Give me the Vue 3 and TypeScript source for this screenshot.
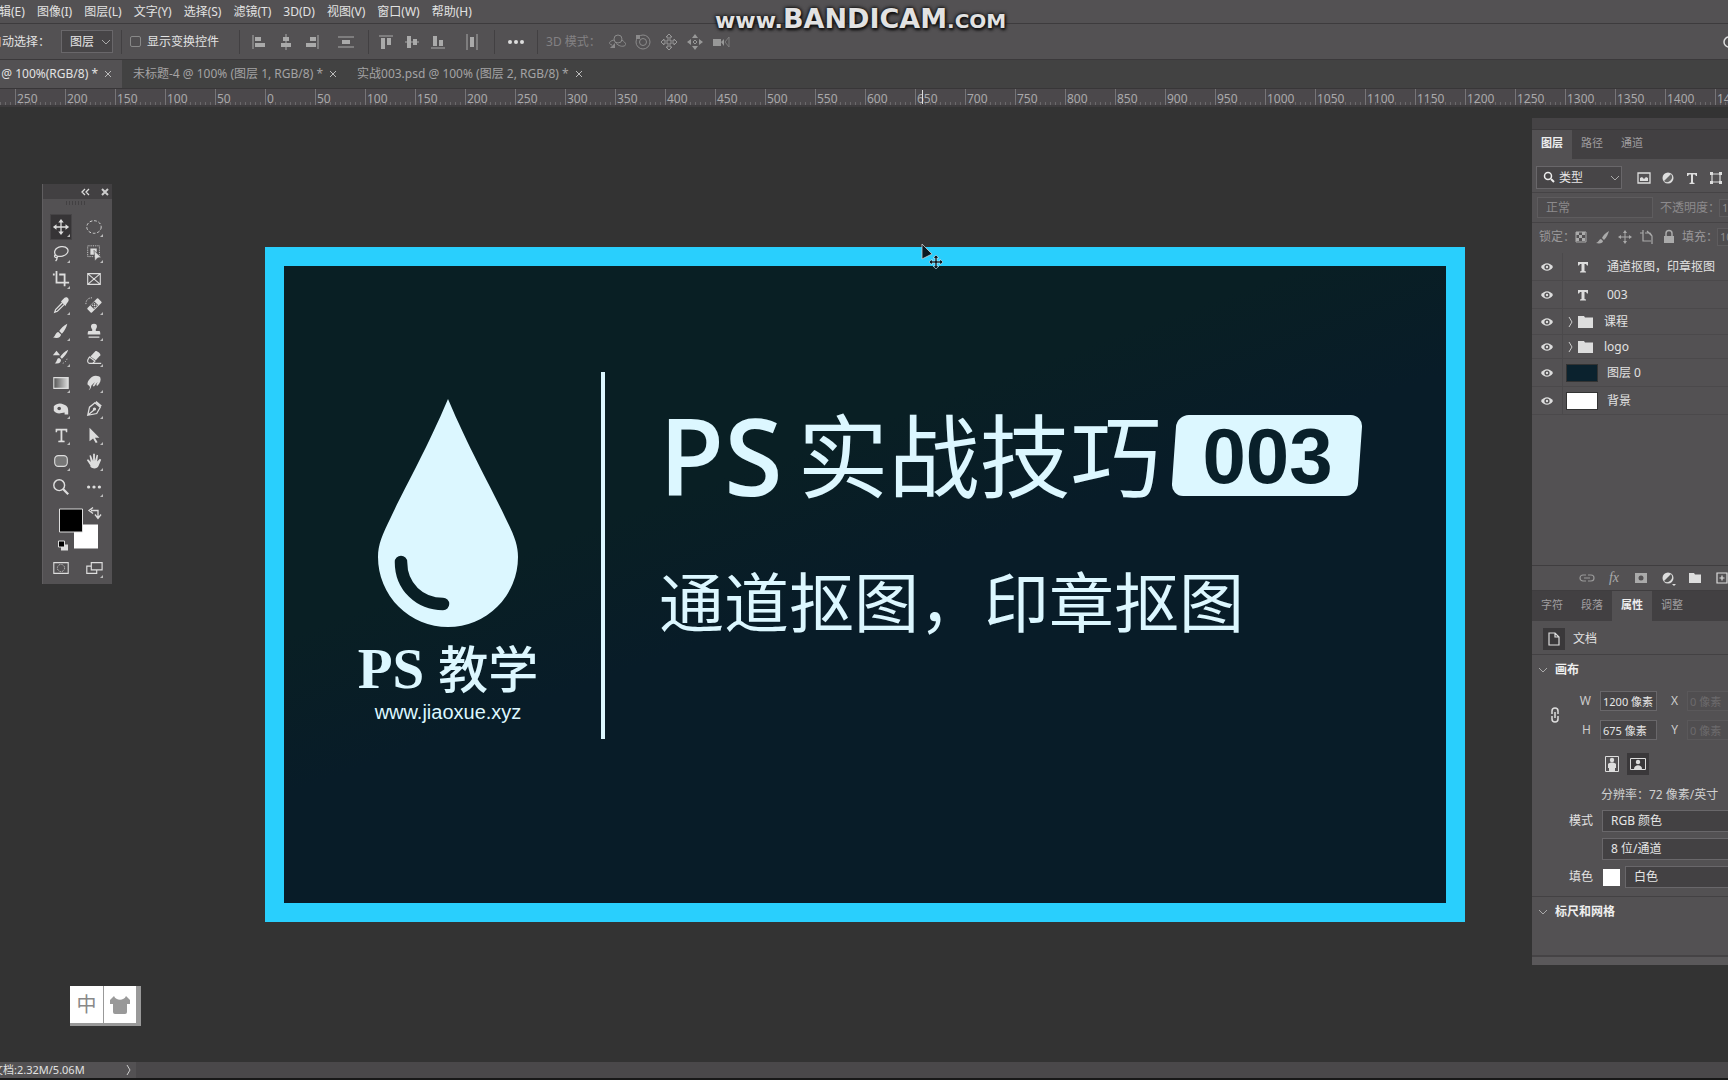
<script setup lang="ts">
interface MenuEntry { label: string }
interface Layer { name: string; kind: 'text' | 'group' | 'dark' | 'white'; height: string }

const menus: MenuEntry[] = [
  '编辑(E)', '图像(I)', '图层(L)', '文字(Y)', '选择(S)', '滤镜(T)', '3D(D)', '视图(V)', '窗口(W)', '帮助(H)',
].map((label) => ({ label }))

const tabs: string[] = ['1 @ 100%(RGB/8) *', '未标题-4 @ 100% (图层 1, RGB/8) *', '实战003.psd @ 100% (图层 2, RGB/8) *']

const rulerMarks: number[] = Array.from({ length: 50 }, (_, i) => Math.abs(i * 50 - 300))

const alignA: Record<string, string> = {
  左对齐: '<path d="M2 2v14" stroke="#aaa"/><path d="M4 4h6v4H4zM4 10h10v4H4z" fill="#aaa"/>',
  水平居中: '<path d="M9 1v16" stroke="#aaa"/><path d="M6 4h6v4H6zM4 10h10v4H4z" fill="#aaa"/>',
  右对齐: '<path d="M15 2v14" stroke="#aaa"/><path d="M7 4h6v4H7zM3 10h10v4H3z" fill="#aaa"/>',
}
const alignB: Record<string, string> = {
  垂直分布: '<path d="M1 4h16M1 14h16" stroke="#aaa"/><path d="M5 7h8v4H5z" fill="#aaa"/>',
}
const alignC: Record<string, string> = {
  顶对齐: '<path d="M2 3h14" stroke="#aaa"/><path d="M4 5h4v11H4zM10 5h4v7h-4z" fill="#aaa"/>',
  垂直居中: '<path d="M2 9h14" stroke="#aaa"/><path d="M4 3h4v12H4zM10 6h4v6h-4z" fill="#aaa"/>',
  底对齐: '<path d="M2 15h14" stroke="#aaa"/><path d="M4 3h4v10H4zM10 7h4v6h-4z" fill="#aaa"/>',
}
const alignD: Record<string, string> = {
  水平分布: '<path d="M4 1v16M14 1v16" stroke="#aaa"/><path d="M7 4h4v10H7z" fill="#aaa"/>',
}
const modes3d: Record<string, string> = {
  旋转: '<g fill="none" stroke="#999"><circle cx="10" cy="6" r="4"/><path d="M6 7C1 8 0 11 4 12M14 7c4 3 5 5 2 6-3 1-7-1-9-4"/></g><path d="M2 15l5-5v5z" fill="#999"/>',
  滚动: '<g fill="none" stroke="#999"><circle cx="9" cy="9" r="7"/><circle cx="9" cy="9" r="3.5"/></g><path d="M2 2h4v4H2z" fill="#999"/>',
  拖动: '<path d="M9 1l3 3h-2v4h4V6l3 3-3 3v-2h-4v4h2l-3 3-3-3h2v-4H4v2L1 9l3-3v2h4V4H6z" fill="none" stroke="#aaa"/>',
  滑动: '<path d="M9 1l3 4H6zM9 17l3-4H6zM1 9l4-3v6zM17 9l-4-3v6z" fill="#aaa"/><path d="M7 9l2-2 2 2-2 2z" fill="none" stroke="#aaa"/>',
  缩放: '<path d="M1 6h8v7H1zM9 9l3-3v7z" fill="#aaa"/><path d="M17 4l-4 5 4 5z" fill="none" stroke="#888"/>',
}

const tools: { name: string; art: string; more: boolean }[] = [
  { name: '移动工具', more: true, art: '<path d="M10 3v14M3 10h14" stroke="#ddd" stroke-width="1.4"/><path d="M10 1l3 4H7zM10 19l3-4H7zM1 10l4-3v6zM19 10l-4-3v6z" fill="#ddd"/>' },
  { name: '椭圆选框工具', more: true, art: '<ellipse cx="10" cy="10" rx="8" ry="7" fill="none" stroke="#ddd" stroke-dasharray="3 2"/>' },
  { name: '套索工具', more: true, art: '<path d="M5 13C1 10 3 4 10 3s9 4 7 7-8 5-12 3zm0 0c-2-2-3 1-1 2s3-1 1-2zm0 2c1 1 0 3-1 4" fill="none" stroke="#ddd" stroke-width="1.4"/>' },
  { name: '对象选择工具', more: true, art: '<path d="M3 2h13v12H3z" fill="none" stroke="#ddd" stroke-dasharray="1 1"/><path d="M6 5h7v4l-3 3H6z" fill="#ddd"/><path d="M10 7l8 8-4 .5L11 19z" fill="#ddd" stroke="#535153" stroke-width=".7"/>' },
  { name: '裁剪工具', more: true, art: '<path d="M5 1v13h8M1 5h2M8 5h6v13M15 14h4" fill="none" stroke="#ddd" stroke-width="2"/>' },
  { name: '图框工具', more: false, art: '<path d="M3 4h14v12H3zM3 4l14 12M17 4L3 16" fill="none" stroke="#ddd" stroke-width="1.2"/>' },
  { name: '吸管工具', more: true, art: '<path d="M12 7l-8 8-1 3 3-1 8-8" fill="none" stroke="#ddd" stroke-width="1.4"/><path d="M10 6l5 5 1-2 2-3c2-3-2-6-4-4l-2 2z" fill="#ddd"/>' },
  { name: '污点修复画笔工具', more: true, art: '<path d="M3.500 14L14 3.500l3.500 3.500L7 17.500z" fill="#ddd" stroke="#ddd" stroke-width="2" stroke-linejoin="round"/><path d="M6 10.500L10.500 6l4 4-4.500 4.500z" fill="#535153"/><path d="M8 10.300h5M10.500 8v5" stroke="#ddd" stroke-width="1.500" stroke-dasharray="1 1"/><path d="M1 9C1 4 4 2 8 2" fill="none" stroke="#ddd" stroke-dasharray="1 1"/>' },
  { name: '画笔工具', more: true, art: '<path d="M17 2c-4 2-7 5-9 8l3 3c3-3 5-7 6-11zM7 11c-3 0-3 5-6 6 5 2 9 0 9-3z" fill="#ddd"/>' },
  { name: '仿制图章工具', more: true, art: '<path d="M10 2c4 0 4 4 2 6v2h4c1 0 1 3 1 4H3c0-1 0-4 1-4h4V8C6 6 6 2 10 2zM4 16h12v1.500H4z" fill="#ddd"/>' },
  { name: '历史记录画笔工具', more: true, art: '<path d="M18 2c-4 2-7 5-9 8l2 2c3-3 6-6 7-10zM8 11c-3 0-2 4-5 6 5 1 7-1 7-4z" fill="#ddd"/><path d="M1 8l4-5 4 5z" fill="#ddd"/><path d="M12 17c3-1 5-4 5-7" fill="none" stroke="#ddd" stroke-dasharray="1 2"/>' },
  { name: '橡皮擦工具', more: true, art: '<path d="M11.500 3.500c1-1 6.500 2.500 5.500 4.500l-5 5.500-6-4z" fill="#ddd"/><path d="M5 10l6 4.500-2.500 2.500H5c-2 0-3-3-1-5.500zM8 17h10" fill="none" stroke="#ddd" stroke-width="1.300"/>' },
  { name: '渐变工具', more: true, art: '<defs><linearGradient id="ramp"><stop offset="0" stop-color="#555"/><stop offset="1" stop-color="#ddd"/></linearGradient></defs><path d="M2 4h16v12H2z" fill="url(#ramp)" stroke="#ddd" stroke-width="1.200"/>' },
  { name: '涂抹工具', more: true, art: '<path d="M4 18c3-3 1-5-1-6-1-3 2-7 5-9 3-2 8-1 9 1 1 3 0 6-3 9l-1.500-.500L14 9l-4 5-1.500-.700L11 9l-4 4c0 2-1 4-3 5z" fill="#ddd"/>' },
  { name: '减淡工具', more: true, art: '<path d="M2 7c3-3 7-4 11-2 4 1 5 4 5 7v4h-4v-2c-5 1-9 2-12-2z" fill="#ddd"/><circle cx="8" cy="9.500" r="2" fill="#535153"/>' },
  { name: '钢笔工具', more: true, art: '<path d="M3 17l2-9 6-5 6 5-4 7zM3 17l7-6" fill="none" stroke="#ddd" stroke-width="1.400"/><circle cx="10.500" cy="10" r="1.800" fill="#ddd"/><path d="M12 2l6 5" stroke="#ddd" stroke-width="2"/>' },
  { name: '横排文字工具', more: true, art: '<path d="M4 3h13v4h-1.500L15 5h-3.500v11l2.500.500V18H7v-1.500l2.500-.500V5H6l-.500 2H4z" fill="#ddd"/>' },
  { name: '路径选择工具', more: true, art: '<path d="M5 2v15l4-3 3 5 2-1-3-5h5z" fill="#ddd"/>' },
  { name: '圆角矩形工具', more: true, art: '<rect x="3" y="4" width="14" height="12" rx="4" fill="#777" stroke="#ddd" stroke-width="1.200"/>' },
  { name: '抓手工具', more: true, art: '<path d="M6 15L2 9l1.500-1 3 3L5 4l1.500-.500L9 10V2h2v8l2-7 1.500.500-1 7 3-3 1.500 1-3 7c-1 3-6 4-9 1z" fill="#ddd"/>' },
  { name: '缩放工具', more: false, art: '<circle cx="8" cy="8" r="6" fill="none" stroke="#ddd" stroke-width="1.600"/><path d="M12 12l6 6" stroke="#ddd" stroke-width="2.500"/>' },
  { name: '编辑工具栏', more: true, art: '<circle cx="4" cy="10" r="1.800" fill="#ddd"/><circle cx="10" cy="10" r="1.800" fill="#ddd"/><circle cx="16" cy="10" r="1.800" fill="#ddd"/>' },
]
const quickTools: { name: string; art: string; more: boolean }[] = [
  { name: '快速蒙版', more: false, art: '<path d="M2 4h16v12H2z" fill="none" stroke="#ddd" stroke-width="1.200"/><circle cx="10" cy="10" r="4" fill="none" stroke="#ddd" stroke-dasharray="1 1"/>' },
  { name: '屏幕模式', more: true, art: '<path d="M7 4h12v8H7zM7 8H2v8h11v-4" fill="none" stroke="#ddd" stroke-width="1.300"/>' },
]

const filterIcons: Record<string, string> = {
  像素图层: '<path d="M3 4h12v10H3z" fill="none" stroke="#ddd" stroke-width="1.300"/><path d="M5 12V9l2-1 2 2 2-2 2 1v3z" fill="#ddd"/>',
  调整图层: '<circle cx="9" cy="9" r="5.500" fill="#ddd"/><path d="M12 5L5 12a5 5 0 0 0 7-7z" fill="#666"/>',
  文字图层: '<path d="M4 4h10v3h-1l-1-1.500h-2v8l1.500.500v1h-5v-1L8 13.500v-8H6L5 7H4z" fill="#ddd"/>',
  形状图层: '<path d="M5 5h8v8H5z" fill="none" stroke="#ddd" stroke-width="1.200"/><path d="M3 3h3v3H3zM12 3h3v3h-3zM3 12h3v3H3zM12 12h3v3h-3z" fill="#ddd"/>',
}
const lockIcons: Record<string, string> = {
  锁定透明像素: '<path d="M4 4h10v10H4z" fill="none" stroke="#aaa"/><path d="M4 4h3v3H4zM10 4h3v3h-3zM7 7h3v3H7zM4 10h3v3H4zM10 10h3v3h-3z" fill="#aaa"/>',
  锁定图像像素: '<path d="M15 3c-4 2-6 5-7 7l2 2c3-3 4-6 5-9zM7 11c-2 0-2 3-5 4 4 1 7 0 7-2z" fill="#aaa"/>',
  锁定位置: '<path d="M9 4v10M4 9h10" stroke="#aaa"/><path d="M9 2l2 3H7zM9 16l2-3H7zM2 9l3-2v4zM16 9l-3-2v4z" fill="#aaa"/>',
  锁定画板: '<path d="M5 2v11h8M2 5h3M7 5h5l2 3v8M9 3l5 5" fill="none" stroke="#aaa" stroke-width="1.200"/>',
  锁定全部: '<path d="M4 8h10v7H4z" fill="#aaa"/><path d="M6 8V5.500a3 3 0 0 1 6 0V8" fill="none" stroke="#aaa" stroke-width="1.500"/>',
}
const footIcons: Record<string, string> = {
  链接图层: '<path d="M8 12H5a3 3 0 0 1 0-6h3M10 6h3a3 3 0 0 1 0 6h-3M6 9h6" fill="none" stroke="#999" stroke-width="1.200"/>',
  添加蒙版: '<path d="M3 4h12v10H3z" fill="#aaa"/><circle cx="9" cy="9" r="2.500" fill="#535153"/>',
  调整: '<circle cx="9" cy="9" r="5.500" fill="#ddd"/><path d="M12 5L5 12a5 5 0 0 0 7-7z" fill="#555"/><path d="M13 15h4l-2 2z" fill="#ddd"/>',
  新建组: '<path d="M3 4h5l1 1.500h6V14H3z" fill="#ddd"/>',
  新建图层: '<path d="M4 4h10v10H4zM9 6.500v5M6.500 9h5" fill="none" stroke="#ddd" stroke-width="1.200"/>',
}

const layers: Layer[] = [
  { name: '通道抠图，印章抠图', kind: 'text', height: '28px' },
  { name: '003', kind: 'text', height: '28px' },
  { name: '课程', kind: 'group', height: '26px' },
  { name: 'logo', kind: 'group', height: '24px' },
  { name: '图层 0', kind: 'dark', height: '28px' },
  { name: '背景', kind: 'white', height: '28px' },
]
</script>

<template>
  <div class="app">
    <nav class="menubar">
      <button v-for="m in menus" :key="m.label">{{ m.label }}</button>
      <div class="watermark"><small>www.</small>BANDICAM<small class="com">.COM</small></div>
    </nav>

    <div class="options">
      <label class="auto" for="auto-pick">自动选择：</label>
      <span class="pick">
        <select id="auto-pick"><option>图层</option></select>
        <svg class="chev" viewBox="0 0 10 10"><path d="M1 3l4 4 4-4" fill="none" stroke="#aaa" /></svg>
      </span>
      <i class="rule"></i>
      <label class="tick"><input type="checkbox" />显示变换控件</label>
      <i class="rule wide"></i>
      <div class="icons">
        <button v-for="(art, name) in alignA" :key="name" :aria-label="name"><svg viewBox="0 0 18 18" v-html="art"></svg></button>
      </div>
      <div class="icons distribute">
        <button v-for="(art, name) in alignB" :key="name" :aria-label="name"><svg viewBox="0 0 18 18" v-html="art"></svg></button>
      </div>
      <i class="rule"></i>
      <div class="icons">
        <button v-for="(art, name) in alignC" :key="name" :aria-label="name"><svg viewBox="0 0 18 18" v-html="art"></svg></button>
      </div>
      <div class="icons distribute">
        <button v-for="(art, name) in alignD" :key="name" :aria-label="name"><svg viewBox="0 0 18 18" v-html="art"></svg></button>
      </div>
      <i class="rule"></i>
      <button class="more" aria-label="更多"><b></b><b></b><b></b></button>
      <i class="rule"></i>
      <span class="mode3d">3D 模式：</span>
      <div class="icons faint">
        <button v-for="(art, name) in modes3d" :key="name" :aria-label="name"><svg viewBox="0 0 18 18" v-html="art"></svg></button>
      </div>
      <button class="search" aria-label="搜索"><svg viewBox="0 0 14 14"><circle cx="7" cy="7" r="5" fill="none" stroke="#ddd" stroke-width="1.500" /></svg></button>
    </div>

    <div class="tabbar">
      <div v-for="(t, i) in tabs" :key="t" class="tab" :class="{ on: i === 0 }">
        <span>{{ t }}</span>
        <button aria-label="关闭"><svg viewBox="0 0 8 8"><path d="M1 1l6 6M7 1L1 7" stroke="#bbb" /></svg></button>
      </div>
    </div>

    <div class="ruler">
      <span v-for="(n, i) in rulerMarks" :key="i">{{ n }}</span>
      <i class="pointer-mark"></i>
    </div>

    <main class="workspace">
      <section class="document">
        <div class="artboard">
          <div class="brand">
            <svg class="drop" viewBox="0 0 140 228">
              <path d="M70 0C92 52 113 88 127 118C136 136 140 146 140 158A70 70 0 0 1 0 158C0 146 4 136 13 118C27 88 48 52 70 0Z" fill="#dcf7ff" />
              <path d="M23 163C23 188 42 205 65 205" fill="none" stroke="#091f25" stroke-width="12.500" stroke-linecap="round" />
            </svg>
            <div class="brand-name"><b>PS</b><span>教学</span></div>
            <div class="brand-url">www.jiaoxue.xyz</div>
          </div>
          <div class="bar"></div>
          <div class="copy">
            <h1><b>PS</b><span>实战技巧</span><em>003</em></h1>
            <h2>通道抠图，印章抠图</h2>
          </div>
        </div>
      </section>

      <aside class="toolbox">
        <header>
          <svg viewBox="0 0 10 8"><path d="M4 1L1 4l3 3M8 1L5 4l3 3" fill="none" stroke="#ddd" stroke-width="1.300" /></svg>
          <svg viewBox="0 0 8 8"><path d="M1 1l6 6M7 1L1 7" stroke="#ccc" stroke-width="2" /></svg>
        </header>
        <div class="grip"></div>
        <div class="tools">
          <button v-for="(t, i) in tools" :key="t.name" :aria-label="t.name" :class="{ on: i === 0, more: t.more }">
            <svg viewBox="0 0 20 20" v-html="t.art"></svg>
          </button>
        </div>
        <svg class="swatches" viewBox="0 0 66 54">
          <path d="M29 24h24v24H29z" fill="#fff" />
          <path d="M14.500 8.500h23v23h-23z" fill="#000" stroke="#ddd" />
          <path d="M46 10h7v7M50 14l3 4 3-4M48 7l-4 3 4 3" fill="none" stroke="#ddd" stroke-width="1.300" />
          <path d="M16 44h7v6h-7z" fill="#ddd" /><path d="M13.500 40.500h6v6h-6z" fill="#000" stroke="#ddd" />
        </svg>
        <div class="tools">
          <button v-for="t in quickTools" :key="t.name" :aria-label="t.name" :class="{ more: t.more }">
            <svg viewBox="0 0 20 20" v-html="t.art"></svg>
          </button>
        </div>
      </aside>

      <aside class="panels">
        <div class="panel-head"></div>
        <div class="ptabs layers-tabs"><button class="on">图层</button><button>路径</button><button>通道</button></div>
        <div class="prow filter">
          <span class="kind">
            <svg class="mag" viewBox="0 0 12 12"><circle cx="5" cy="5" r="3.500" fill="none" stroke="#eee" stroke-width="1.500" /><path d="M8 8l3 3" stroke="#eee" stroke-width="2" /></svg>
            <select aria-label="筛选类型"><option>类型</option></select>
            <svg class="chev" viewBox="0 0 10 10"><path d="M1 3l4 4 4-4" fill="none" stroke="#aaa" /></svg>
          </span>
          <button v-for="(art, name) in filterIcons" :key="name" :aria-label="name"><svg viewBox="0 0 18 18" v-html="art"></svg></button>
        </div>
        <div class="prow blend">
          <select aria-label="混合模式" disabled><option>正常</option></select>
          <label for="opacity">不透明度：</label><input id="opacity" value="100%" disabled />
        </div>
        <div class="prow lock">
          <span>锁定：</span>
          <button v-for="(art, name) in lockIcons" :key="name" :aria-label="name"><svg viewBox="0 0 18 18" v-html="art"></svg></button>
          <label for="fill">填充：</label><input id="fill" value="100%" disabled />
        </div>
        <ul class="layer-list">
          <li v-for="l in layers" :key="l.name" :class="l.kind" :style="{ height: l.height }">
            <button class="eye" aria-label="可见性">
              <svg viewBox="0 0 14 10"><path d="M1 5c3-5 9-5 12 0-3 5-9 5-12 0z" fill="#ddd" /><circle cx="7" cy="5" r="2.600" fill="#535153" /><circle cx="7" cy="5" r="1.200" fill="#ddd" /></svg>
            </button>
            <span class="thumb">
              <svg v-if="l.kind === 'text'" viewBox="0 0 18 18"><path d="M4 4h10v3.500h-1L12 6h-1.500v7l1.500.500v1H6v-1l1.500-.500V6H6L5 7.500H4z" fill="#ddd" /></svg>
              <svg v-else-if="l.kind === 'group'" class="folder" viewBox="0 0 26 14"><path d="M1 2l3 5-3 5" fill="none" stroke="#ccc" /><path d="M10 1h6l1 1.500h8V13H10z" fill="#ddd" /></svg>
              <i v-else></i>
            </span>
            <span>{{ l.name }}</span>
          </li>
        </ul>
        <div class="foot">
          <template v-for="(art, name, i) in footIcons" :key="name">
            <button :aria-label="name"><svg viewBox="0 0 18 18" v-html="art"></svg></button>
            <button v-if="i === 0" class="fx">fx</button>
          </template>
        </div>
        <div class="ptabs props-tabs"><button>字符</button><button>段落</button><button class="on">属性</button><button>调整</button></div>
        <div class="doc-row">
          <i><svg viewBox="0 0 14 16"><path d="M2 2h6l4 4v8H2zM8 2v4h4" fill="none" stroke="#ddd" stroke-width="1.200" /></svg></i>文档
        </div>
        <div class="fold"><svg viewBox="0 0 10 10"><path d="M1 3l4 4 4-4" fill="none" stroke="#aaa" /></svg>画布</div>
        <div class="canvas-props">
          <svg class="chain" viewBox="0 0 10 16"><path d="M2 7V4a3 3 0 0 1 6 0v3M2 9v3a3 3 0 0 0 6 0V9M5 5v6" fill="none" stroke="#ddd" stroke-width="1.500" /></svg>
          <div class="size-grid">
            <label for="w">W</label><input id="w" value="1200 像素" /><label for="x">X</label><input id="x" value="0 像素" disabled />
            <label for="h">H</label><input id="h" value="675 像素" /><label for="y">Y</label><input id="y" value="0 像素" disabled />
          </div>
        </div>
        <div class="orient">
          <button aria-label="纵向"><svg viewBox="0 0 22 22"><path d="M4.500 3.500h13v15h-13z" fill="none" stroke="#ddd" /><circle cx="11" cy="7" r="2.200" fill="#ddd" /><path d="M7 11c2-2 6-2 8 0v4h-1v3H8v-3H7z" fill="#ddd" /></svg></button>
          <button class="on" aria-label="横向"><svg viewBox="0 0 22 22"><path d="M3.500 5.500h15v11h-15z" fill="none" stroke="#ddd" /><circle cx="11" cy="9" r="2.200" fill="#ddd" /><path d="M7 16c0-5 8-5 8 0z" fill="#ddd" /></svg></button>
        </div>
        <div class="resolution">分辨率：72 像素/英寸</div>
        <div class="field"><label for="mode">模式</label><select id="mode"><option>RGB 颜色</option></select></div>
        <div class="field"><label for="depth"></label><select id="depth" aria-label="位深"><option>8 位/通道</option></select></div>
        <div class="field"><label for="paint">填色</label><i class="chip"></i><select id="paint"><option>白色</option></select></div>
        <div class="fold last"><svg viewBox="0 0 10 10"><path d="M1 3l4 4 4-4" fill="none" stroke="#aaa" /></svg>标尺和网格</div>
        <div class="panel-end"></div>
      </aside>

      <div class="ime">
        <button>中</button>
        <button aria-label="皮肤"><svg viewBox="0 0 22 20"><path d="M5 1c2 5 10 5 12 0l4 4v4h-3v8q0 2-2 2H6q-2 0-2-2V9H1V5z" fill="#999" /></svg></button>
      </div>

      <svg class="cursor" viewBox="0 0 28 30">
        <path d="M1 1v15l10-5z" fill="#0a1a22" stroke="#ccc" stroke-width=".800" />
        <path d="M15 12l3 3h-2v3h3v-2l3 3-3 3v-2h-3v3h2l-3 3-3-3h2v-3h-3v2l-3-3 3-3v2h3v-3h-2z" fill="#0a1a22" stroke="#cef" stroke-width=".600" />
      </svg>
    </main>

    <footer class="status"><div><span>文档:2.32M/5.06M</span><svg viewBox="0 0 6 12"><path d="M1 1l3 5-3 5" fill="none" stroke="#ccc" /></svg></div></footer>
  </div>
</template>

<style>
body { background: #333; }
</style>

<style scoped>
* { box-sizing: border-box; }
button { border: 0; padding: 0; margin: 0; background: none; color: inherit; font: inherit; line-height: 1; }
select, input { appearance: none; border: 1px solid #69676a; border-radius: 0; margin: 0; background: #474547; color: #e6e6e6; font: inherit; outline: 0; opacity: 1; }
svg { display: block; }
i { font-style: normal; }
.app { display: flex; flex-direction: column; min-height: 100vh; overflow: hidden; background: #333; color: #e2e2e2; font: 12px/16px "Noto Sans", "Noto Sans CJK SC", sans-serif; white-space: nowrap; }

.menubar { position: relative; display: flex; align-items: center; gap: 12px; height: 24px; background: #535153; border-bottom: 1px solid #3d3b3d; }
.menubar button { flex: none; }
.menubar button:first-child { margin-left: -13px; }
.watermark { position: absolute; z-index: 2; left: 715px; top: 4px; display: flex; align-items: baseline; font: bold 27px/30px "DejaVu Sans", sans-serif; color: #e2e2e2; text-shadow: 0 0 3px #111, 0 0 4px #111, 1px 2px 3px #111; }
.watermark small { font-size: 22px; }
.watermark .com { font-size: 20px; }

.options { display: flex; align-items: center; height: 36px; background: #535153; border-bottom: 1px solid #3b393b; overflow: hidden; }
.auto { width: 68px; margin-left: -10px; }
.pick { position: relative; display: block; width: 52px; height: 23px; margin-left: 3px; }
.pick select { width: 100%; height: 100%; padding: 0 8px; }
.chev { position: absolute; right: 2px; top: 7px; width: 10px; height: 10px; pointer-events: none; }
.rule { flex: none; width: 1px; height: 24px; margin: 0 8px; background: #424042; }
.rule.wide { margin: 0 11px 0 20px; }
.tick { display: flex; align-items: center; gap: 6px; }
.tick input { width: 11px; height: 11px; border-color: #888; border-radius: 2px; background: #504e50; }
.icons { display: flex; gap: 8px; }
.icons svg { width: 18px; height: 18px; }
.icons.distribute { margin: 0 5px 0 16px; }
.icons.faint { margin-left: 2px; opacity: .8; }
.more { display: flex; gap: 2px; margin: 0 5px; }
.more b { width: 4px; height: 4px; border-radius: 50%; background: #ddd; }
.mode3d { color: #838183; width: 60px; }
.search { margin: 0 -8px 0 auto; }
.search svg { width: 14px; height: 14px; }

.tabbar { display: flex; height: 29px; background: #424242; border-bottom: 1px solid #383638; }
.tab { display: flex; align-items: center; gap: 6px; padding: 0 9px 0 11px; color: #a4a2a4; }
.tab.on { justify-content: flex-end; width: 122px; padding-right: 10px; background: #535153; color: #e2e2e2; }
.tab svg { width: 8px; height: 8px; }
.tab button { width: 8px; }

.ruler { position: relative; display: flex; height: 18px; overflow: hidden; background: #4b484b; border-bottom: 2px solid #3d3b3d; color: #aaa8aa; }
.ruler span { flex: none; width: 50px; padding-left: 2px; line-height: 19px; background: linear-gradient(90deg, #767476 1px, transparent 1px), repeating-linear-gradient(90deg, #6a686a 0 1px, transparent 1px 5px) bottom / 100% 3px no-repeat; }
.ruler span:first-child { margin-left: -35px; }
.pointer-mark { position: absolute; left: 922px; top: 1px; width: 1px; height: 14px; background: #ddd; }

.workspace { position: relative; flex: 1; min-height: 880px; background: #333; }
.document { position: absolute; left: 265px; top: 140px; width: 1200px; height: 675px; padding: 19px; background: #29cffd; }
.artboard { display: flex; height: 100%; background: linear-gradient(160deg, #091f24 35%, #081c28 50%); color: #dcf7ff; }
.brand { display: flex; flex-direction: column; align-items: center; width: 328px; padding-top: 133px; }
.drop { width: 140px; height: 228px; }
.brand-name { display: flex; gap: 14px; align-items: baseline; margin-top: 8px; line-height: 63px; }
.brand-name b { font-family: "Liberation Serif", serif; font-size: 57px; }
.brand-name span { font-family: "Noto Sans CJK SC", sans-serif; font-size: 50px; font-weight: 500; }
.brand-url { font: 20px/24px "Liberation Sans", sans-serif; }
.bar { flex: none; width: 4px; height: 367px; margin: 106px 0 0 -11px; background: #dcf7ff; }
.copy { padding: 133px 0 0 54px; }
h1, h2 { margin: 0; font-family: "Noto Sans CJK SC", sans-serif; font-weight: 400; }
h1 { display: flex; align-items: center; height: 112px; }
h1 b { font: 600 106px/112px "Open Sans", sans-serif; }
h1 span { align-self: flex-start; margin-left: 15px; font-size: 91px; line-height: 104px; }
h1 em { position: relative; z-index: 0; width: 186px; height: 81px; margin: 0 0 0 13px; text-align: center; font: bold 78px/82px "Liberation Sans", sans-serif; color: #09202a; }
h1 em::before { content: ""; position: absolute; z-index: -1; inset: 0; border-radius: 12px; background: #dcf7ff; transform: skewX(-4deg); }
h2 { margin-top: 40px; font-size: 65px; line-height: 96px; }

.toolbox { position: absolute; left: 42px; top: 77px; width: 70px; padding-bottom: 3px; background: #535153; border-left: 1px solid #605e60; }
.toolbox header { display: flex; justify-content: flex-end; align-items: center; gap: 9px; height: 15px; padding-right: 2px; background: #424042; }
.toolbox header svg { width: 10px; height: 8px; }
.grip { height: 15px; padding: 2px 0 0 23px; }
.grip::before { content: ""; display: block; width: 20px; height: 4px; background: repeating-linear-gradient(90deg, #424042 0 1px, transparent 1px 3px); }
.tools { display: grid; grid-template-columns: 32px 32px; column-gap: 1px; padding-left: 2px; }
.tools button { position: relative; display: grid; place-items: center; height: 26px; }
.tools svg { width: 18px; height: 18px; }
.tools .on { background: #363436; box-shadow: inset 0 0 0 1px #464446; }
.tools .more::after { content: ""; position: absolute; right: 2px; bottom: 3px; width: 3px; height: 3px; background: #bbb; clip-path: polygon(100% 0, 100% 100%, 0 100%); }
.swatches { width: 66px; height: 55px; margin-left: 2px; }

.panels { position: absolute; right: 0; top: 11px; width: 196px; overflow: hidden; background: #535153; }
.panel-head { height: 12px; background: #454345; border-bottom: 1px solid #3b393b; }
.ptabs { display: flex; height: 29px; background: #424042; color: #a09ea0; font-size: 11px; }
.ptabs button { width: 40px; padding-bottom: 4px; }
.ptabs .on { background: #535153; color: #eee; font-weight: bold; }
.panels button { flex: none; }
.panels svg { width: 18px; height: 18px; }
.prow { display: flex; align-items: center; height: 30px; border-bottom: 1px solid #454345; }
.filter { height: 34px; padding: 4px 0 0 4px; gap: 6px; }
.kind { flex: none; position: relative; width: 86px; height: 23px; margin-right: 7px; }
.kind select { width: 100%; height: 100%; padding: 0 22px; }
.kind .mag { position: absolute; left: 7px; top: 5px; width: 12px; height: 12px; }
.panels .chev { width: 10px; height: 10px; }
.blend { padding-left: 5px; color: #8c8a8c; }
.blend select { flex: none; width: 116px; height: 21px; padding: 0 8px; margin-right: 7px; }
.blend select, .prow input { border-color: #5e5c5e; background: #4e4c4e; color: #8c8a8c; }
.prow label { flex: none; width: 59px; }
.prow input { flex: none; width: 60px; height: 18px; padding: 0 2px; font-size: 11px; }
.lock { height: 30px; padding: 0 0 3px 7px; gap: 4px; color: #9a989a; border: 0; }
.lock span { flex: none; width: 29px; }
.lock label { width: 31px; }
.layer-list { min-height: 312px; margin: 0; padding: 0; list-style: none; }
.layer-list li { display: flex; align-items: center; border-bottom: 1px solid #4b494b; }
.eye { display: grid; place-items: center; width: 31px; height: 100%; border-right: 1px solid #4b494b; }
.panels .eye svg { width: 14px; height: 10px; }
.thumb { display: flex; justify-content: center; width: 40px; margin-right: 4px; }
.group .thumb { justify-content: flex-start; padding-left: 5px; margin-right: 1px; }
.panels .folder { width: 26px; height: 14px; }
.thumb i { width: 32px; height: 18px; margin-right: 2px; border: 1px solid #333; background: #fff; }
.dark .thumb i { background: #0b222e; }
.foot { display: flex; align-items: center; gap: 9px; height: 26px; padding-left: 46px; border-top: 1px solid #3f3d3f; border-bottom: 1px solid #3f3d3f; }
.foot .fx { width: 18px; color: #aaa; font: italic 14px/16px "Liberation Serif", serif; }
.props-tabs { height: 30px; }
.doc-row { display: flex; align-items: center; gap: 8px; height: 34px; padding: 2px 0 0 11px; border-bottom: 1px solid #434143; }
.doc-row i { display: grid; place-items: center; width: 22px; height: 22px; background: #3a383a; }
.panels .doc-row svg { width: 14px; height: 16px; }
.fold { display: flex; align-items: center; gap: 7px; height: 30px; padding-left: 6px; font-weight: bold; font-size: 12px; color: #eee; }
.panels .fold svg { width: 10px; height: 10px; }
.canvas-props { display: flex; align-items: center; height: 60px; padding-left: 18px; }
.panels .chain { flex: none; width: 10px; height: 16px; }
.size-grid { display: grid; grid-template-columns: 33px 57px 30px 60px; row-gap: 9px; align-items: center; margin-left: 7px; }
.size-grid label { padding-right: 9px; text-align: right; color: #ccc; }
.size-grid input { width: 100%; height: 20px; padding: 0 2px; font-size: 11px; }
.size-grid input:disabled { border-color: #5a585a; background: #504e50; color: #6c6a6c; }
.orient { display: flex; gap: 4px; height: 38px; padding-left: 69px; align-items: center; }
.orient button { width: 22px; height: 22px; }
.orient .on { background: #3a383a; }
.panels .orient svg { width: 22px; height: 22px; }
.resolution { height: 24px; padding: 2px 0 0 69px; line-height: 20px; color: #d0d0d0; }
.field { display: flex; align-items: center; height: 28px; }
.field label { flex: none; width: 70px; padding-right: 9px; text-align: right; }
.field select { flex: 1; height: 22px; margin-right: -4px; padding: 0 8px; background: #434143; }
.chip { width: 17px; height: 17px; margin: 0 5px 0 1px; background: #fff; }
.last { margin-top: 5px; border-top: 1px solid #434143; }
.panel-end { height: 39px; border-bottom: 8px solid #5a585a; box-shadow: inset 0 -2px #454345; }

.ime { position: absolute; left: 70px; bottom: 36px; display: flex; border: solid #999; border-width: 0 5px 3px 0; background: #fff; color: #888; }
.ime button { display: grid; place-items: center; width: 33px; height: 37px; font-size: 20px; }
.ime button + button { border-left: 1px solid #999; }
.ime svg { width: 22px; height: 20px; }
.cursor { position: absolute; left: 921px; top: 136px; width: 28px; height: 30px; }

.status { height: 18px; background: #4a484a; border-bottom: 2px solid #181818; }
.status div { display: flex; justify-content: space-between; align-items: center; width: 136px; height: 16px; padding-right: 4px; background: #535153; font-size: 11px; }
.status span { margin-left: -8px; }
.status svg { width: 6px; height: 12px; }
</style>
